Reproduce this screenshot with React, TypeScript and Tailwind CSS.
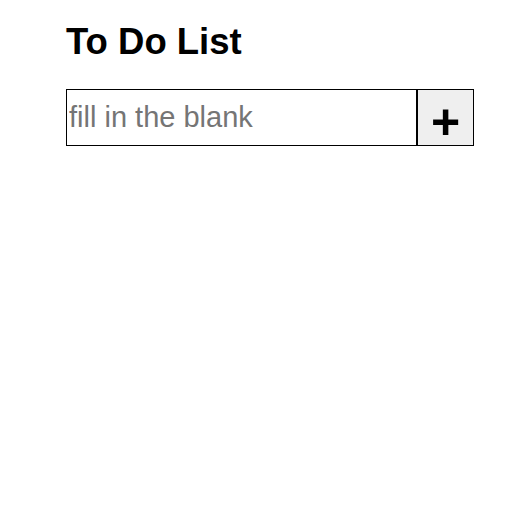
import { useState } from "react";

export default function App() {
  const [task, setTask] = useState("");

  return (
    <div className="min-h-screen bg-white pl-[66px] pt-[21px] font-['Liberation_Sans',Arial,sans-serif] text-black">
      <h1 className="text-[36.5px] font-bold leading-[41px]">To Do List</h1>
      <div className="mt-[27px] flex w-[408px]">
        <input
          autoFocus
          value={task}
          onChange={(e) => setTask(e.target.value)}
          placeholder="fill in the blank"
          className="h-[57px] w-[351px] border border-black px-[2px] text-[29px] outline-none placeholder:text-[#757575]"
        />
        <button className="flex h-[57px] w-[57px] items-center justify-center border border-black bg-[#efefef] pt-[8px] text-[50px] font-bold leading-none">
          +
        </button>
      </div>
    </div>
  );
}
